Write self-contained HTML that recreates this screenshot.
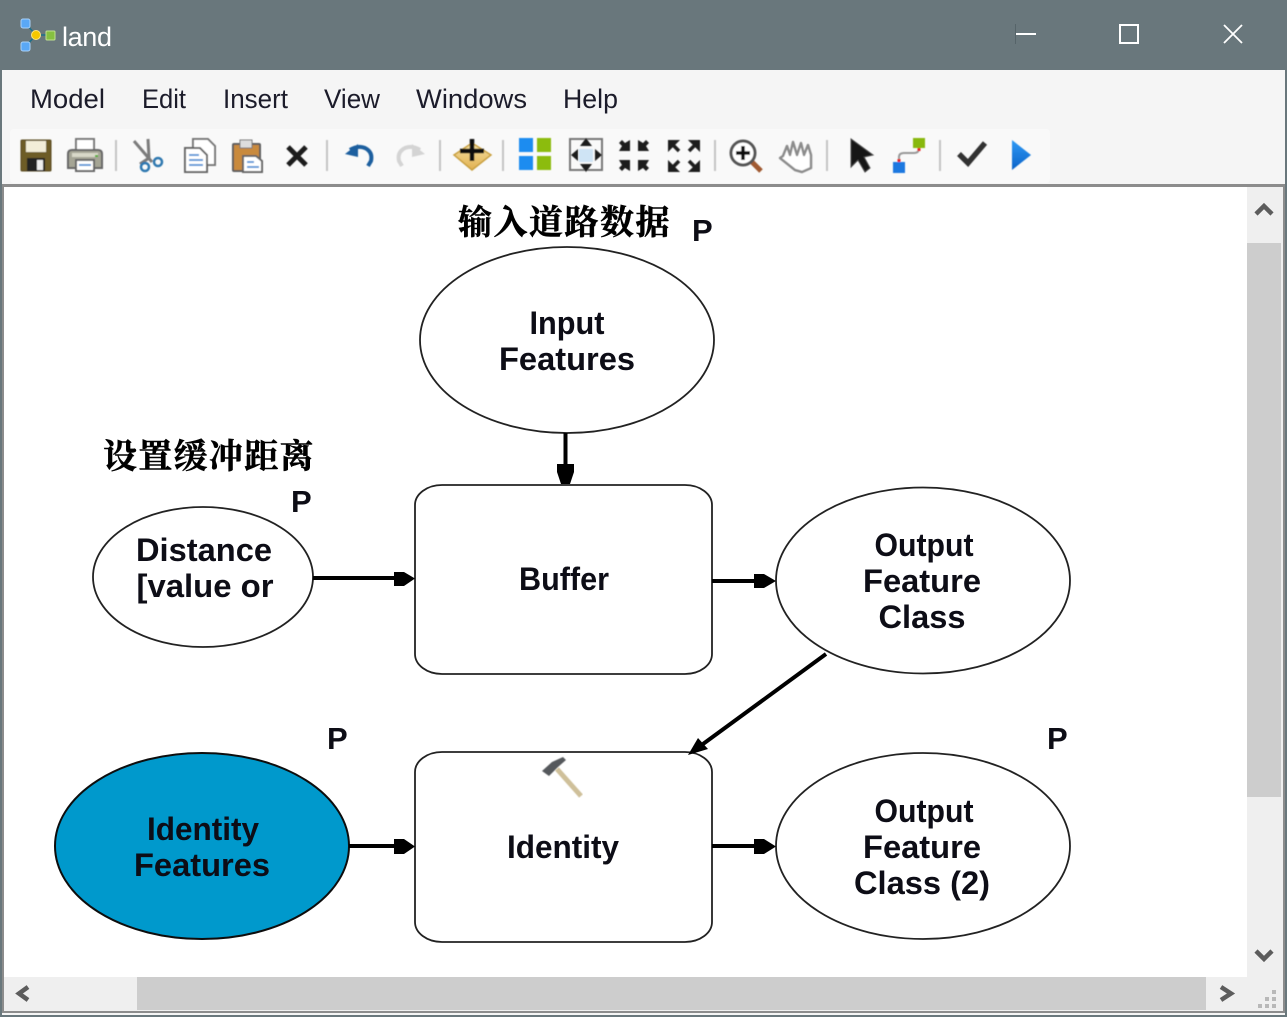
<!DOCTYPE html>
<html>
<head>
<meta charset="utf-8">
<style>
html,body{margin:0;padding:0;background:#fff;width:1287px;height:1017px;overflow:hidden}
svg{display:block}
.m{font:27px "Liberation Sans",sans-serif;fill:#1a1a2a}
.t{font:bold 32px "Liberation Sans",sans-serif;fill:#0a0a14;text-anchor:middle}
.p{font:bold 31px "Liberation Sans",sans-serif;fill:#0a0a14}
.c{font:bold 34px "Noto Serif CJK SC","Noto Sans CJK SC",serif;fill:#000;stroke:#000;stroke-width:.5px;letter-spacing:1.5px}
</style>
</head>
<body>
<svg width="1287" height="1017" viewBox="0 0 1287 1017" xmlns="http://www.w3.org/2000/svg">
<defs>
<filter id="b" x="-5%" y="-5%" width="110%" height="110%"><feGaussianBlur stdDeviation="0.6"/></filter>
<filter id="s" x="-5%" y="-5%" width="110%" height="110%"><feGaussianBlur stdDeviation="0.35"/></filter>
<linearGradient id="gold" x1="0" y1="0" x2="0" y2="1"><stop offset="0" stop-color="#f6e2a4"/><stop offset="1" stop-color="#e0b050"/></linearGradient>
<linearGradient id="blue" x1="0" y1="0" x2="0" y2="1"><stop offset="0" stop-color="#2f9af5"/><stop offset="1" stop-color="#0a62c8"/></linearGradient>
</defs>

<!-- window frame -->
<rect width="1287" height="1017" fill="#69777c"/>
<rect x="2" y="70" width="1283" height="945" fill="#f5f5f5"/>
<rect x="10" y="129" width="1040" height="54" rx="4" fill="#f9f9f9"/>
<rect x="2" y="184" width="1283" height="3" fill="#8c8c8c"/>
<rect x="2" y="187" width="2" height="826" fill="#8c8c8c"/>
<rect x="1283" y="187" width="2" height="826" fill="#8c8c8c"/>
<rect x="2" y="1011" width="1283" height="2" fill="#8c8c8c"/>

<!-- canvas -->
<rect x="4" y="187" width="1243" height="790" fill="#fff"/>
<!-- scrollbars -->
<rect x="1247" y="187" width="36" height="824" fill="#efefef"/>
<rect x="4" y="977" width="1279" height="34" fill="#efefef"/>
<rect x="1247" y="243" width="34" height="554" fill="#cdcdcd"/>
<rect x="137" y="977" width="1069" height="33" fill="#cdcdcd"/>
<g fill="none" stroke="#5c5c5c" stroke-width="4.500" filter="url(#s)">
<path d="M1256 214 L1264 206 L1272 214"/>
<path d="M1256 951 L1264 959 L1272 951"/>
<path d="M28 987 L19 993.500 L28 1000"/>
<path d="M1221 987 L1231 993.500 L1221 1000"/>
</g>
<g fill="#b8b8b8">
<rect x="1272" y="990" width="4" height="4"/>
<rect x="1265" y="997" width="4" height="4"/><rect x="1272" y="997" width="4" height="4"/>
<rect x="1258" y="1004" width="4" height="4"/><rect x="1265" y="1004" width="4" height="4"/><rect x="1272" y="1004" width="4" height="4"/>
</g>

<!-- title bar -->
<g filter="url(#s)">
<path d="M26 24 L36 35 L26 46 M36 35 L50 35" stroke="#1f6f8a" stroke-width="1.500" fill="none"/>
<rect x="21" y="19" width="9" height="9" rx="2" fill="#5aa8f5" stroke="#a8d0f8"/>
<rect x="21" y="42" width="9" height="9" rx="2" fill="#5aa8f5" stroke="#a8d0f8"/>
<circle cx="36" cy="35" r="4.500" fill="#f5c800" stroke="#fbe680"/>
<rect x="46" y="31" width="9" height="9" rx="1" fill="#86c040" stroke="#c0e090"/>
</g>
<text x="62" y="46" font-family="Liberation Sans, sans-serif" font-size="27" fill="#fff" textLength="50" lengthAdjust="spacing" filter="url(#s)">land</text>
<rect x="1015" y="24" width="1" height="20" fill="#566469"/>
<rect x="1016" y="33" width="20" height="2" fill="#fff"/>
<rect x="1120" y="25" width="18" height="18" fill="none" stroke="#fff" stroke-width="2"/>
<path d="M1224 25 L1242 43 M1242 25 L1224 43" stroke="#fff" stroke-width="1.800"/>

<!-- menu -->
<g filter="url(#s)">
<text class="m" x="30" y="108" textLength="75" lengthAdjust="spacingAndGlyphs">Model</text>
<text class="m" x="142" y="108" textLength="44" lengthAdjust="spacingAndGlyphs">Edit</text>
<text class="m" x="223" y="108" textLength="65" lengthAdjust="spacingAndGlyphs">Insert</text>
<text class="m" x="324" y="108" textLength="56" lengthAdjust="spacingAndGlyphs">View</text>
<text class="m" x="416" y="108" textLength="111" lengthAdjust="spacingAndGlyphs">Windows</text>
<text class="m" x="563" y="108" textLength="55" lengthAdjust="spacingAndGlyphs">Help</text>
</g>

<!-- toolbar -->
<g filter="url(#b)">
<!-- separators -->
<g fill="#c4c4c4">
<rect x="115" y="140" width="2" height="31"/><rect x="326" y="140" width="2" height="31"/>
<rect x="439" y="140" width="2" height="31"/><rect x="502" y="140" width="2" height="31"/>
<rect x="714" y="140" width="2" height="31"/><rect x="826" y="140" width="2" height="31"/>
<rect x="939" y="140" width="2" height="31"/>
</g>
<!-- save -->
<rect x="21" y="140" width="30" height="31" rx="1" fill="#6d5c28" stroke="#5a4c20"/>
<rect x="26" y="141" width="20" height="11" fill="#f2edd8"/>
<rect x="27" y="158" width="18" height="13" fill="#222"/>
<rect x="37" y="160" width="6" height="10" fill="#eee"/>
<!-- print -->
<rect x="76" y="139" width="18" height="14" fill="#fff" stroke="#777" stroke-width="2"/>
<path d="M68 168 L68 154 Q68 150 72 150 L98 150 Q102 150 102 154 L102 168 Z" fill="#a5a595" stroke="#666" stroke-width="2"/>
<rect x="72" y="153" width="26" height="4" fill="#d8d8c8"/>
<rect x="95" y="155" width="3" height="2" fill="#52b030"/>
<rect x="76" y="160" width="18" height="11" fill="#fff" stroke="#666" stroke-width="2"/>
<rect x="79" y="164" width="12" height="2" fill="#5a9ad8"/>
<!-- cut -->
<path d="M134 141 L152 162 M148 139 L149 158 L140 164" stroke="#7c7c7c" stroke-width="3" fill="none"/>
<circle cx="145" cy="167" r="4" fill="none" stroke="#2f78b0" stroke-width="2.500"/>
<circle cx="158" cy="162" r="4" fill="none" stroke="#2f78b0" stroke-width="2.500"/>
<!-- copy -->
<path d="M193 139 L208 139 L215 146 L215 165 L193 165 Z" fill="#fff" stroke="#777" stroke-width="2"/>
<path d="M185 148 L200 148 L207 155 L207 172 L185 172 Z" fill="#fff" stroke="#666" stroke-width="2"/>
<path d="M189 155 H199 M189 160 H203 M189 165 H203" stroke="#5a9ad8" stroke-width="2"/>
<!-- paste -->
<rect x="233" y="144" width="27" height="27" rx="1" fill="#c98a3c" stroke="#5f5f5f" stroke-width="2"/>
<rect x="240" y="140" width="12" height="8" fill="#ddd" stroke="#777"/>
<path d="M243 156 L256 156 L262 161 L262 172 L243 172 Z" fill="#fff" stroke="#666" stroke-width="2"/>
<path d="M247 162 H254 M247 167 H259" stroke="#5a9ad8" stroke-width="2"/>
<!-- delete -->
<path d="M288 147 L306 165 M306 147 L288 165" stroke="#1c1c1c" stroke-width="5"/>
<!-- undo / redo -->
<path d="M350 150 Q358 145 365 148 Q373 152 371 161 L368 166" fill="none" stroke="#1f5f9f" stroke-width="4"/>
<path d="M345 154 L358 144 L358 157 Z" fill="#1f5f9f"/>
<path d="M420 150 Q412 145 405 148 Q397 152 399 161 L402 166" fill="none" stroke="#d4d4d4" stroke-width="4"/>
<path d="M425 154 L412 144 L412 157 Z" fill="#d4d4d4"/>
<!-- add data -->
<path d="M472 143 L491 155 L472 170 L454 155 Z" fill="url(#gold)" stroke="#c9a040" stroke-width="1.500"/>
<path d="M472 139 V161 M460 151 H484" stroke="#0c0c0c" stroke-width="4.500"/>
<!-- auto layout -->
<rect x="519" y="138" width="14" height="14" fill="#1f8cf0"/><rect x="537" y="138" width="14" height="14" fill="#8cbc10"/>
<rect x="519" y="156" width="14" height="14" fill="#1f8cf0"/><rect x="537" y="156" width="14" height="14" fill="#8cbc10"/>
<!-- full extent -->
<rect x="570" y="139" width="32" height="31" fill="none" stroke="#777" stroke-width="2"/>
<rect x="579" y="149" width="14" height="13" fill="#cfe4f5"/>
<path d="M586 138 L592 146 H580 Z M586 172 L592 164 H580 Z M571 155 L578 149 V161 Z M602 155 L595 149 V161 Z" fill="#1c1c1c"/>
<!-- zoom in fixed -->
<g fill="#1c1c1c">
<path d="M619 143 L622 140 L625 143 L630 140 V151 H619 L622 146 Z"/>
<path d="M649 143 L646 140 L643 143 L638 140 V151 H649 L646 146 Z"/>
<path d="M619 168 L622 171 L625 168 L630 171 V160 H619 L622 165 Z"/>
<path d="M649 168 L646 171 L643 168 L638 171 V160 H649 L646 165 Z"/>
<!-- zoom out fixed -->
<path d="M668 140 L680 140 L668 152 Z M700 140 L688 140 L700 152 Z M668 172 L680 172 L668 160 Z M700 172 L688 172 L700 160 Z"/>
</g>
<path d="M670 142 L679 151 M698 142 L689 151 M670 170 L679 161 M698 170 L689 161" stroke="#1c1c1c" stroke-width="3.500"/>
<!-- zoom lens -->
<path d="M751 161 L761 171" stroke="#a05a30" stroke-width="5"/>
<circle cx="743" cy="153" r="12" fill="#fff" stroke="#555" stroke-width="3"/>
<path d="M743 146 V160 M736 153 H750" stroke="#111" stroke-width="3.500"/>
<!-- hand -->
<path d="M783 156 L787 146 L790 155 L793 142 L797 155 L801 143 L804 155 L808 145 L811 155 L811 168 L802 172 L795 170 L780 158 Z" fill="#fff" stroke="#8c8c8c" stroke-width="2.500" stroke-linejoin="round"/>
<!-- select -->
<path d="M851 139 L851 167 L858 160 L865 172 L870 168 L864 157 L873 155 Z" fill="#151515" stroke="#444"/>
<!-- connect -->
<path d="M899 163 V157 Q899 153 904 153 H914 Q919 153 919 148" fill="none" stroke="#999" stroke-width="2"/>
<path d="M899 159 V163 M919 145 V151" stroke="#e82020" stroke-width="3"/>
<rect x="893" y="162" width="12" height="11" fill="#1f78e0"/>
<rect x="913" y="138" width="12" height="10" fill="#88b810"/>
<!-- validate -->
<path d="M959 154 L968 163 L985 143" fill="none" stroke="#333" stroke-width="5.500"/>
<!-- run -->
<path d="M1012 140 L1031 155 L1012 170 Z" fill="url(#blue)"/>
</g>

<!-- diagram -->
<g fill="none" stroke="#222" stroke-width="1.800" filter="url(#s)">
<ellipse cx="567" cy="340" rx="147" ry="93"/>
<ellipse cx="203" cy="577" rx="110" ry="70"/>
<ellipse cx="923" cy="580.500" rx="147" ry="93"/>
<ellipse cx="923" cy="846" rx="147" ry="93"/>
<ellipse cx="202" cy="846" rx="147" ry="93" fill="#0099cc" stroke="#101010" stroke-width="2"/>
<rect x="415" y="485" width="297" height="189" rx="27" ry="20"/>
<rect x="415" y="752" width="297" height="190" rx="27" ry="20"/>
</g>
<g stroke="#000" stroke-width="4" fill="none" filter="url(#s)">
<path d="M565.500 433 V468"/>
<path d="M313 578 H398"/>
<path d="M712 581 H758"/>
<path d="M826 654 L703 744"/>
<path d="M349 846 H398"/>
<path d="M712 846 H758"/>
</g>
<g fill="#000" filter="url(#s)">
<path d="M557 464 H574 V472 L570 484 H561 L557 472 Z"/>
<path d="M394 572 H404 L415 578.500 L404 586 H394 Z"/>
<path d="M754 574 H764 L776 581 L764 588 H754 Z"/>
<path d="M688 755 L698 738 L708 749 Z"/>
<path d="M394 839 H404 L415 846.500 L404 854 H394 Z"/>
<path d="M754 839 H764 L776 846.500 L764 854 H754 Z"/>
</g>

<!-- hammer -->
<g filter="url(#b)">
<path d="M557 769 L581 796" stroke="#cfc09a" stroke-width="5"/>
<path d="M542 771 L552 762 L563 757 L566 760 L558 767 L549 776 Z" fill="#55585c"/>
</g>

<!-- labels -->
<g filter="url(#s)">
<text class="c" x="458" y="234" textLength="213">输入道路数据</text>
<text class="c" x="103" y="468" textLength="212">设置缓冲距离</text>
<text class="p" x="692" y="241">P</text>
<text class="p" x="291" y="512">P</text>
<text class="p" x="327" y="749">P</text>
<text class="p" x="1047" y="749">P</text>

<text class="t" x="567" y="334" textLength="75" lengthAdjust="spacingAndGlyphs">Input</text>
<text class="t" x="567" y="370" textLength="136" lengthAdjust="spacingAndGlyphs">Features</text>
<text class="t" x="204" y="561" textLength="136" lengthAdjust="spacingAndGlyphs">Distance</text>
<text class="t" x="205" y="597" textLength="137" lengthAdjust="spacingAndGlyphs">[value or</text>
<text class="t" x="564" y="590" textLength="90" lengthAdjust="spacingAndGlyphs">Buffer</text>
<text class="t" x="924" y="556" textLength="99" lengthAdjust="spacingAndGlyphs">Output</text>
<text class="t" x="922" y="592" textLength="118" lengthAdjust="spacingAndGlyphs">Feature</text>
<text class="t" x="922" y="628" textLength="87" lengthAdjust="spacingAndGlyphs">Class</text>
<text class="t" x="563" y="858" textLength="112" lengthAdjust="spacingAndGlyphs">Identity</text>
<text class="t" x="203" y="840" textLength="112" lengthAdjust="spacingAndGlyphs">Identity</text>
<text class="t" x="202" y="876" textLength="136" lengthAdjust="spacingAndGlyphs">Features</text>
<text class="t" x="924" y="822" textLength="99" lengthAdjust="spacingAndGlyphs">Output</text>
<text class="t" x="922" y="858" textLength="118" lengthAdjust="spacingAndGlyphs">Feature</text>
<text class="t" x="922" y="894" textLength="136" lengthAdjust="spacingAndGlyphs">Class (2)</text>
</g>
</svg>
</body>
</html>
